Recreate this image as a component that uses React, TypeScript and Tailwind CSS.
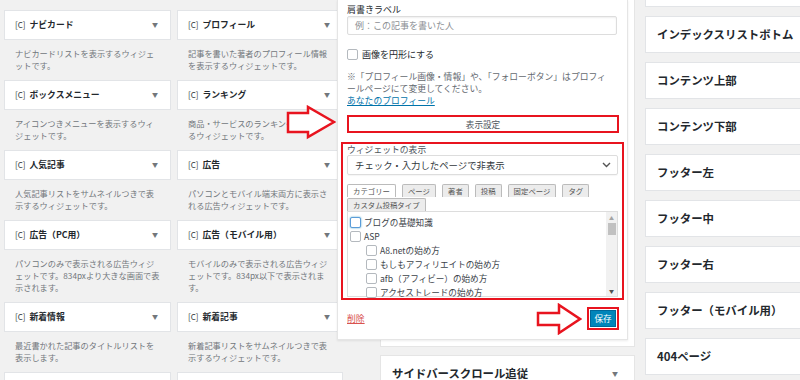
import React from "react";

type W = { t: string; d: string[] };

const col1: W[] = [
  { t: "ナビカード", d: ["ナビカードリストを表示するウィジェ", "ットです。"] },
  { t: "ボックスメニュー", d: ["アイコンつきメニューを表示するウィ", "ジェットです。"] },
  { t: "人気記事", d: ["人気記事リストをサムネイルつきで表", "示するウィジェットです。"] },
  { t: "広告（PC用）", d: ["パソコンのみで表示される広告ウィジ", "ェットです。834pxより大きな画面で表", "示されます。"] },
  { t: "新着情報", d: ["最近書かれた記事のタイトルリストを", "表示します。"] },
  { t: "最近のコメント", d: [] },
];

const col2: W[] = [
  { t: "プロフィール", d: ["記事を書いた著者のプロフィール情報", "を表示するウィジェットです。"] },
  { t: "ランキング", d: ["商品・サービスのランキングを表示す", "るウィジェットです。"] },
  { t: "広告", d: ["パソコンとモバイル端末両方に表示さ", "れる広告ウィジェットです。"] },
  { t: "広告（モバイル用）", d: ["モバイルのみで表示される広告ウィジ", "ェットです。834px以下で表示されま", "す。"] },
  { t: "新着記事", d: ["新着記事リストをサムネイルつきで表", "示するウィジェットです。"] },
  { t: "目次", d: [] },
];

const rightTitles = [
  "",
  "インデックスリストボトム",
  "コンテンツ上部",
  "コンテンツ下部",
  "フッター左",
  "フッター中",
  "フッター右",
  "フッター（モバイル用）",
  "404ページ",
];

function WBox({ w }: { w: W }) {
  return (
    <div>
      <div className="h-[30px] bg-white border border-[#e2e4e7] flex items-center pl-[10px] pr-[12px]">
        <span className="text-[8px] text-[#32373c] mr-[4px] leading-none">[C]</span>
        <span className="text-[8.8px] font-bold text-[#23282d] flex-1 whitespace-nowrap leading-none">{w.t}</span>
        <span className="text-[6px] text-[#72777c] leading-none">▼</span>
      </div>
      <div className="pt-[7px] pb-[9px] pl-[11px] text-[8.2px] leading-[12px] text-[#72777c] whitespace-nowrap">
        {w.d.map((l, i) => (
          <div key={i}>{l}</div>
        ))}
      </div>
    </div>
  );
}

function Cb({ focus }: { focus?: boolean }) {
  return (
    <span
      className={
        "inline-block w-[11px] h-[11px] rounded-[2px] bg-white shrink-0 " +
        (focus ? "border border-[#5b9dd9] shadow-[0_0_2px_rgba(30,140,190,0.8)]" : "border border-[#b4b9be]")
      }
    />
  );
}

const tabs = ["カテゴリー", "ページ", "著者", "投稿", "固定ページ", "タグ", "カスタム投稿タイプ"];

const items: { t: string; lv: number; focus?: boolean }[] = [
  { t: "ブログの基礎知識", lv: 0, focus: true },
  { t: "ASP", lv: 0 },
  { t: "A8.netの始め方", lv: 1 },
  { t: "もしもアフィリエイトの始め方", lv: 1 },
  { t: "afb（アフィビー）の始め方", lv: 1 },
  { t: "アクセストレードの始め方", lv: 1 },
];

export default function App() {
  return (
    <div className="relative w-[800px] h-[380px] overflow-hidden bg-[#f1f1f1] font-['Noto_Sans_CJK_JP','Noto_Sans',sans-serif]">
      <div className="flex h-full">
        {/* available widgets */}
        <div className="w-[380px] shrink-0 flex gap-[6px] pl-[4px] pt-[10px]">
          <div className="w-[167px] shrink-0 flex flex-col">
            {col1.map((w, i) => (
              <WBox key={i} w={w} />
            ))}
          </div>
          <div className="w-[166px] shrink-0 flex flex-col">
            {col2.map((w, i) => (
              <WBox key={i} w={w} />
            ))}
          </div>
        </div>

        {/* sidebar widget area */}
        <div className="w-[255px] shrink-0 flex flex-col">
          <div className="h-[347px] shrink-0 bg-white border border-t-0 border-[#e5e5e5]" />
          <div className="mt-[8px] h-[37px] shrink-0 bg-white border border-[#e5e5e5] flex items-center pl-[11px] pr-[16px]">
            <span className="text-[11.4px] font-bold text-[#23282d] flex-1 whitespace-nowrap">サイドバースクロール追従</span>
            <span className="text-[6px] text-[#72777c]">▼</span>
          </div>
        </div>

        {/* right widget areas */}
        <div className="ml-[10px] w-[170px] shrink-0 flex flex-col gap-[9px] mt-[-30px]">
          {rightTitles.map((t, i) => (
            <div
              key={i}
              className="h-[37px] shrink-0 bg-white border border-[#e2e4e7] flex items-center pl-[11px]"
            >
              <span className="text-[11.4px] font-bold text-[#23282d] whitespace-nowrap">{t}</span>
            </div>
          ))}
        </div>
      </div>

      {/* expanded widget panel */}
      <div className="absolute left-[337px] top-0 w-[291px] h-[340px] bg-white border border-t-0 border-[#e5e5e5] shadow-[0_1px_2px_rgba(0,0,0,0.08)] pl-[9px] pr-[10px] pt-[4px] flex flex-col">
        <div className="text-[9px] leading-[12px] text-[#23282d]">肩書きラベル</div>
        <div className="h-[19px] border border-[#ddd] rounded-[2px] shadow-[inset_0_1px_2px_rgba(0,0,0,0.07)] flex items-center pl-[7px] text-[9px] text-[#8c8f94]">
          例：この記事を書いた人
        </div>
        <div className="mt-[13px] h-[12px] flex items-center gap-[4px]">
          <Cb />
          <span className="text-[9px] text-[#23282d] leading-none">画像を円形にする</span>
        </div>
        <div className="mt-[11px] text-[8.8px] leading-[12px] text-[#646970] whitespace-nowrap">
          <div>※「プロフィール画像・情報」や、「フォローボタン」はプロフィ</div>
          <div>ールページにて変更してください。</div>
        </div>
        <div className="text-[8.8px] leading-[12px] text-[#0073aa] underline">あなたのプロフィール</div>

        <div className="mt-[8px] -mr-[2px] h-[18px] border-2 border-[#e8141f] bg-white flex items-center justify-center text-[8.6px] text-[#50575e]">
          表示設定
        </div>

        <div className="mt-[9px] -ml-[6px] -mr-[7px] border-2 border-[#e8141f] px-[4px] pb-[1px]">
          <div className="text-[8.8px] leading-[11px] text-[#50575e]">ウィジェットの表示</div>
          <div className="h-[20px] border border-[#ddd] rounded-[2px] flex items-center pl-[7px] pr-[6px] shadow-[0_1px_1px_rgba(0,0,0,0.04)]">
            <span className="flex-1 text-[9.4px] text-[#32373c] whitespace-nowrap">チェック・入力したページで非表示</span>
            <svg width="9" height="6" viewBox="0 0 9 6">
              <path d="M1 1l3.5 3.5L8 1" fill="none" stroke="#555" strokeWidth="1.4" />
            </svg>
          </div>
          <div className="mt-[9px] flex flex-wrap gap-x-[6px] gap-y-[1px]">
            {tabs.map((t, i) => (
              <div
                key={i}
                className={
                  "h-[13px] px-[5px] border border-[#bbb] border-b-0 rounded-t-[2px] text-[7.4px] leading-[12px] text-[#555] whitespace-nowrap " +
                  (i === 0 ? "bg-white" : "bg-[#ececec]")
                }
              >
                {t}
              </div>
            ))}
          </div>
          <div className="h-[86px] border border-[#ddd] bg-white flex">
            <div className="flex-1 pt-[3px] pl-[2px]">
              {items.map((it, i) => (
                <div
                  key={i}
                  className={"h-[14px] flex items-center gap-[3px] " + (it.lv ? "pl-[16px]" : "pl-0")}
                >
                  <Cb focus={it.focus} />
                  <span className="text-[8.6px] text-[#3c434a] whitespace-nowrap leading-none">{it.t}</span>
                </div>
              ))}
            </div>
            <div className="w-[11px] bg-[#f1f1f1] flex flex-col items-center">
              <span className="mt-[3px] text-[5px] leading-[6px] text-[#a3a3a3]">▲</span>
              <div className="mt-[2px] w-[8px] h-[12px] bg-[#c1c1c1]" />
              <div className="flex-1" />
              <span className="mb-[2px] text-[5px] leading-[6px] text-[#505050]">▼</span>
            </div>
          </div>
        </div>

        <div className="mt-[7px] -mr-[2px] h-[23px] flex items-center">
          <span className="flex-1 text-[8.8px] text-[#d9534f] underline">削除</span>
          <svg width="46" height="32" viewBox="0 0 46 32" className="mr-[5px]">
            <polygon
              points="2,10 23,10 23,2 44,16 23,30 23,22 2,22"
              fill="white"
              stroke="#e8141f"
              strokeWidth="2.5"
              strokeLinejoin="miter"
            />
          </svg>
          <div className="h-[23px] border-2 border-[#e8141f] p-[1px] flex">
            <div className="w-[26px] bg-[#0085ba] border border-[#006799] flex items-center justify-center text-[8.6px] text-white">
              保存
            </div>
          </div>
        </div>
      </div>

      {/* left annotation arrow */}
      <svg
        width="50"
        height="35"
        viewBox="0 0 50 35"
        className="absolute left-[286px] top-[105px]"
      >
        <polygon
          points="2,8 22,8 22,2 48,17 22,32 22,27 2,27"
          fill="white"
          stroke="#e8141f"
          strokeWidth="2.5"
        />
      </svg>
    </div>
  );
}
